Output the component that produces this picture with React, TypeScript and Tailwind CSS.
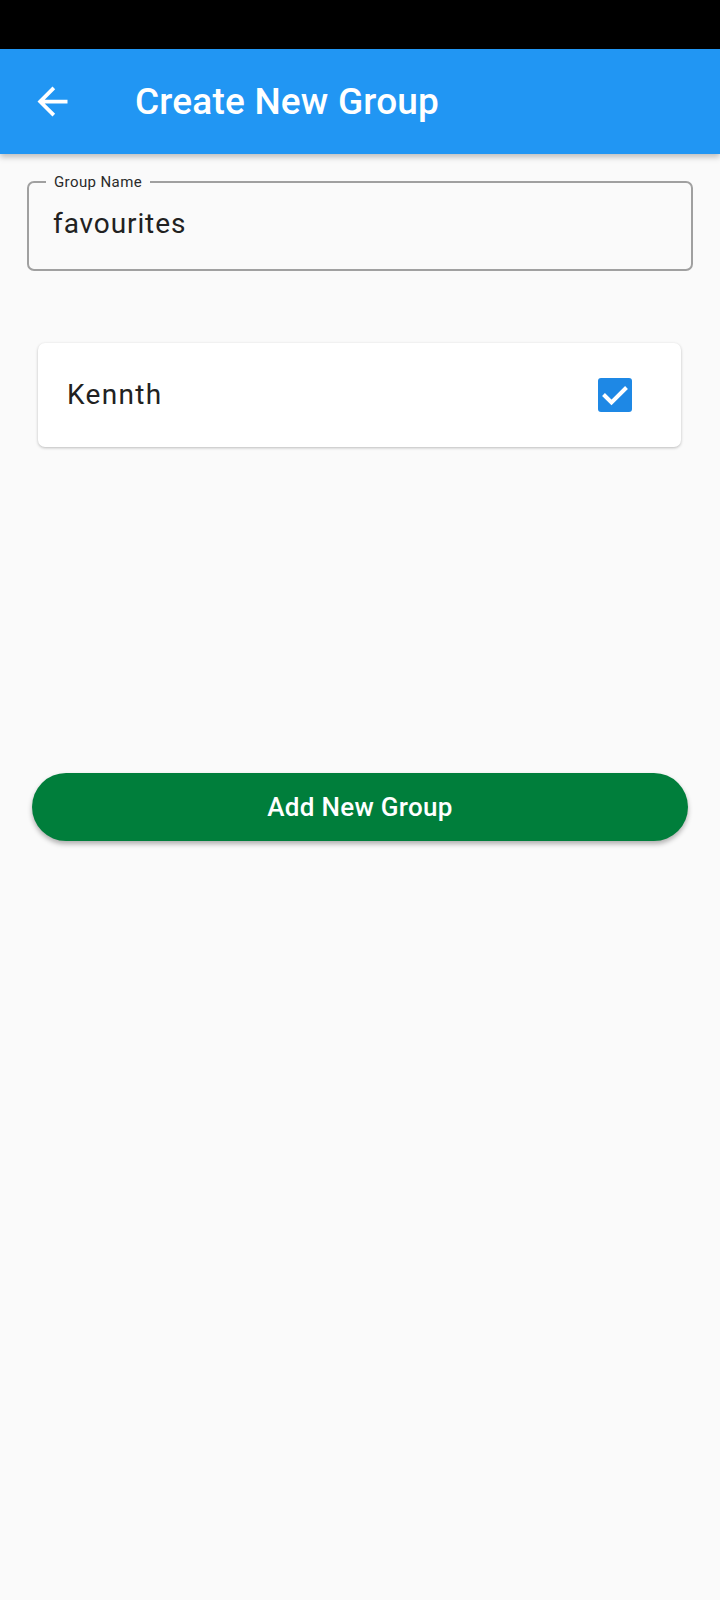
const BackArrow = () => (
    <svg viewBox="0 0 24 24" className="w-[45px] h-[45px]" fill="white">
        <path d="M20 11H7.83l5.59-5.59L12 4l-8 8 8 8 1.41-1.41L7.83 13H20v-2z" />
    </svg>
)

const CheckedBox = () => (
    <div className="w-[34px] h-[34px] rounded-[3px] bg-[#1e88e5] flex items-center justify-center">
        <svg viewBox="0 0 34 34" className="w-[34px] h-[34px]">
            <path d="M5.5 16.5 L13.5 24.5 L28.5 9.5" fill="none" stroke="white" strokeWidth="4" />
        </svg>
    </div>
)

const App = () => {
    return (
        <div className="min-h-[1600px] bg-[#fafafa] font-['Roboto',sans-serif]">
            <div className="h-[49px] bg-black" />
            <div className="relative z-10 h-[105px] bg-[#2196f3] flex items-center shadow-[0_3px_6px_rgba(0,0,0,0.25)]">
                <div className="ml-[30px]">
                    <BackArrow />
                </div>
                <div className="ml-[60px] text-white text-[37px] font-medium tracking-[0.2px]">Create New Group</div>
            </div>

            <div className="px-[27px] pt-[19px]">
                <fieldset className="border-2 border-[#a0a0a0] rounded-[7px] pl-[24px] pr-[24px] pt-[15px] pb-[27px]">
                    <legend className="-ml-[7px] px-[8px] text-[15px] leading-[18px] text-[#2a2a2a] tracking-[0.4px]">
                        Group Name
                    </legend>
                    <div className="text-[28px] leading-[36px] text-[#212121] tracking-[0.9px]">favourites</div>
                </fieldset>
            </div>

            <div className="pl-[38px] pr-[39px] mt-[72px]">
                <div className="h-[104px] bg-white rounded-[7px] shadow-[0_1px_3px_rgba(0,0,0,0.25)] flex items-center justify-between pl-[29px] pr-[49px]">
                    <div className="text-[28px] leading-[36px] text-[#212121] tracking-[1.3px]">Kennth</div>
                    <CheckedBox />
                </div>
            </div>

            <div className="px-[32px] mt-[326px]">
                <button className="w-full h-[68px] rounded-full bg-[#007e3b] text-white text-[26px] font-medium tracking-[0.3px] shadow-[0_3px_5px_rgba(0,0,0,0.3)]">
                    Add New Group
                </button>
            </div>
        </div>
    )
}

export default App
